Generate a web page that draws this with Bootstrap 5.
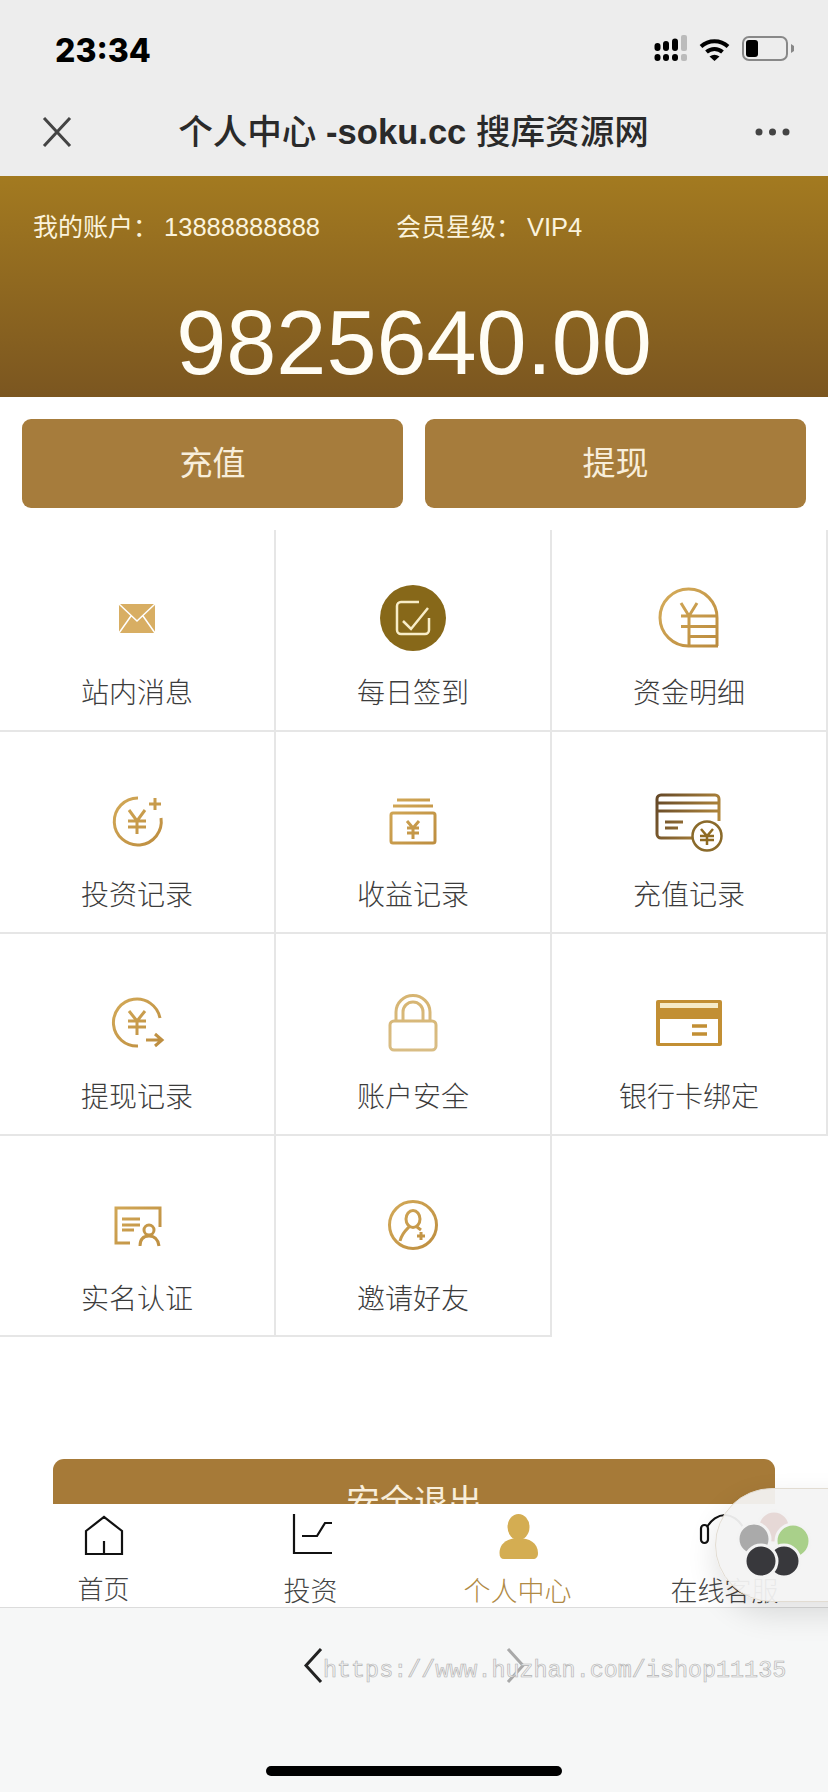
<!DOCTYPE html>
<html lang="zh-CN">
<head>
    <meta charset="UTF-8">
    <meta name="viewport" content="width=device-width, initial-scale=1.0">
    <title>个人中心</title>
    <link rel="stylesheet" href="https://cdn.jsdelivr.net/npm/bootstrap@5.3.0/dist/css/bootstrap.min.css">
    <style>
        body {
            background: #fff;
            font-family: "Liberation Sans", "Noto Sans CJK SC", sans-serif;
            color: #444;
        }
        .phone-page { width: 828px; height: 1792px; overflow: hidden; }
        .grad-defs { position: absolute; width: 0; height: 0; }

        .status-strip { height: 84px; padding: 14px 34px 0 55px; background: #ededed; }
        .clock-text { font-family: Inter, "Liberation Sans", sans-serif; font-size: 32px; font-weight: 800; color: #000; position: relative; top: 2px; }
        .status-icons { gap: 12px; }
        .title-strip { height: 92px; padding: 4px 38px 0 42px; background: #ededed; }
        .title-text { font-size: 34.6px; line-height: 40px; color: #2a2a2a; font-weight: 500; }

        .account-head { height: 222px; padding: 36px 0 0 33px; background: linear-gradient(180deg, #a37a20 0%, #7b5620 100%); color: #fbf3dc; }
        .account-line { font-size: 25px; line-height: 30px; }
        .account-item { width: 363px; }
        .account-value { font-size: 25.5px; margin-left: 6px; }
        .amount-text { margin: 56px 0 0 -33px; font-size: 90px; line-height: 90px; color: #fffdf5; text-align: center; }

        .action-row { padding: 22px 22px 0; gap: 22px; }
        .gold-btn { flex: 1; height: 89px; font-size: 33px; line-height: 73px; padding: 8px 0; border: 0; border-radius: 9px; background: #a67c3c; color: #f8eedb; }

        .menu-grid { margin-top: 22px; }
        .menu-cell { height: 202px; padding-top: 53px; border-right: 2px solid #e6e6e6; border-bottom: 2px solid #e6e6e6; }
        .menu-icon { width: 70px; height: 70px; overflow: visible; }
        .menu-label { margin-top: 23px; font-size: 28px; line-height: 36px; font-weight: 300; color: #3c3c3c; }
        .cell-short { height: 201px; }
        .cell-blank { border: 0; }
        .ln { fill: none; stroke-width: 3; }
        .ln-gold { stroke: url(#goldLine); }
        .ln-brown { stroke: url(#brownLine); }
        .ln-pale { stroke: url(#paleLine); }

        .logout-area { height: 167px; padding: 122px 53px 0; overflow: hidden; }
        .logout-btn { display: block; width: 100%; height: 86px; font-size: 34px; padding: 0; border: 0; border-radius: 11px; background: #a67a38; color: #f8eedb; }

        .tab-strip { height: 104px; background: #fff; border-bottom: 1px solid #dcdcdc; overflow: hidden; }
        .tab-link { padding: 8px 0 0; color: #444; font-size: 27px; line-height: 30px; }
        .tab-link:hover { color: #444; }
        .tab-icon { width: 46px; height: 48px; overflow: visible; }
        .tab-text { margin-top: 17px; font-weight: 300; }
        .tab-text-home { margin-top: 15px; font-size: 26px; }
        .tab-on { color: #b08a45; }

        .browser-strip { height: 184px; background: #f6f7f7; padding-top: 40px; }
        .arrow-row { gap: 183px; }
        .url-mark { position: absolute; left: 323px; top: 49px; font-family: "Liberation Mono", monospace; font-size: 23.4px; line-height: 28px; white-space: nowrap; color: #f2f2f2; -webkit-text-stroke: 0.6px #b0b0b0; }
        .home-pill { width: 296px; height: 10px; margin: 83px auto 0; border-radius: 5px; background: #000; }

        .float-ball { position: absolute; left: 715px; top: 1488px; width: 220px; height: 114px; border: 1px solid #e2dcd2; border-radius: 57px; background: rgba(243, 243, 243, .94); box-shadow: 0 12px 30px rgba(0, 0, 0, .12); }
        .ball-logo { position: absolute; left: 0; top: 0; width: 113px; height: 112px; }
    </style>
</head>
<body>
<svg class="grad-defs" aria-hidden="true">
    <defs>
        <linearGradient id="goldLine" gradientUnits="userSpaceOnUse" x1="0" y1="0" x2="70" y2="70">
            <stop offset="0" stop-color="#d8b05e"/><stop offset="1" stop-color="#b8873a"/>
        </linearGradient>
        <linearGradient id="brownLine" gradientUnits="userSpaceOnUse" x1="0" y1="0" x2="70" y2="30">
            <stop offset="0" stop-color="#5d4226"/><stop offset="1" stop-color="#b58a3c"/>
        </linearGradient>
        <linearGradient id="paleLine" gradientUnits="userSpaceOnUse" x1="0" y1="0" x2="0" y2="70">
            <stop offset="0" stop-color="#d6b36e"/><stop offset="1" stop-color="#d9be87"/>
        </linearGradient>
    </defs>
</svg>

<div class="phone-page d-flex flex-column position-relative">
    <div class="status-strip d-flex justify-content-between align-items-center">
        <span class="clock-text">23:34</span>
        <div class="status-icons d-flex align-items-center">
            <svg width="33" height="27" viewBox="0 0 33 27">
                <rect x="0.5" y="19" width="6" height="7" rx="3"/><rect x="9" y="19" width="6" height="7" rx="3"/><rect x="18" y="19" width="6" height="7" rx="3"/><rect x="27" y="19" width="6" height="7" rx="2" fill="#bbb"/>
                <rect x="0.5" y="8" width="6" height="8" rx="3"/><rect x="9" y="6" width="6" height="10" rx="3"/><rect x="18" y="3.5" width="6" height="12.5" rx="3"/><rect x="27" y="0" width="6" height="16" rx="2" fill="#bbb"/>
            </svg>
            <svg width="31" height="24" viewBox="0 0 31 24">
                <path d="M2 9.5A20 20 0 0 1 29 9.500M7.500 15A12 12 0 0 1 23.500 15" fill="none" stroke="#000" stroke-width="4"/>
                <path d="M10.500 19.500L15.500 24L20.500 19.500Q15.500 16 10.500 19.500Z"/>
            </svg>
            <svg width="52" height="25" viewBox="0 0 52 25">
                <rect x="1" y="1" width="44" height="23" rx="6" fill="none" stroke="#888" stroke-width="2"/>
                <rect x="4" y="4" width="12" height="17" rx="3"/>
                <path d="M49 8L52 10V15L49 17Z" fill="#888"/>
            </svg>
        </div>
    </div>

    <div class="title-strip d-flex align-items-center">
        <svg width="30" height="30" viewBox="0 0 30 30"><path d="M2 1L28 29M28 1L2 29" fill="none" stroke="#444" stroke-width="3"/></svg>
        <div class="title-text flex-grow-1 text-center">个人中心 <span class="fw-bold">-soku.cc</span> 搜库资源网</div>
        <svg width="35" height="8" viewBox="0 0 35 8" fill="#444"><circle cx="4" cy="4" r="3.500"/><circle cx="17.500" cy="4" r="3.500"/><circle cx="31" cy="4" r="3.500"/></svg>
    </div>

    <div class="account-head">
        <div class="account-line d-flex">
            <div class="account-item">我的账户：<span class="account-value">13888888888</span></div>
            <div>会员星级：<span class="account-value">VIP4</span></div>
        </div>
        <div class="amount-text">9825640.00</div>
    </div>

    <div class="action-row d-flex">
        <button class="btn gold-btn" type="button">充值</button>
        <button class="btn gold-btn" type="button">提现</button>
    </div>

    <div class="menu-grid row g-0">
        <div class="col-4 menu-cell d-flex flex-column align-items-center">
            <svg class="menu-icon" viewBox="0 0 70 70">
                <rect x="17" y="21" width="36" height="29" rx="1.500" fill="#d8ae63"/>
                <path d="M17 21L35 38L53 21M17 50L29 33M53 50L41 33" fill="none" stroke="#fff" stroke-width="1.500"/>
            </svg>
            <div class="menu-label">站内消息</div>
        </div>
        <div class="col-4 menu-cell d-flex flex-column align-items-center">
            <svg class="menu-icon" viewBox="0 0 70 70">
                <circle cx="35" cy="35" r="33" fill="#876819"/>
                <path d="M41 19H23a4 4 0 0 0-4 4V47a4 4 0 0 0 4 4H47a4 4 0 0 0 4-4V35" fill="none" stroke="#f8edc8" stroke-width="2.500"/>
                <path d="M25 38L33 46L50 25" fill="none" stroke="#f8edc8" stroke-width="2.500"/>
            </svg>
            <div class="menu-label">每日签到</div>
        </div>
        <div class="col-4 menu-cell d-flex flex-column align-items-center">
            <svg class="menu-icon" viewBox="0 0 70 70">
                <path class="ln ln-gold" d="M64 63H35A28.500 28.500 0 1 1 63 35V63"/>
                <path class="ln ln-gold" d="M27 20L35 33L43 20M27 33H63M27 43.500H63M35 33V63M35 53.500H63"/>
            </svg>
            <div class="menu-label">资金明细</div>
        </div>

        <div class="col-4 menu-cell d-flex flex-column align-items-center">
            <svg class="menu-icon" viewBox="0 0 70 70">
                <path class="ln ln-gold" d="M36 13A23.500 23.500 0 1 0 59 33"/>
                <path class="ln ln-gold" d="M27 25L35 36L43 25M26 36H44M26 42H44M35 36V49M53 13V25M47 19H59"/>
            </svg>
            <div class="menu-label">投资记录</div>
        </div>
        <div class="col-4 menu-cell d-flex flex-column align-items-center">
            <svg class="menu-icon" viewBox="0 0 70 70">
                <path class="ln ln-gold" d="M19 15H52M15 21H55"/>
                <rect class="ln ln-gold" x="13" y="28" width="44" height="30" rx="2"/>
                <path class="ln ln-gold" d="M29 36L35 43L41 36M29 43H41M29 48H41M35 43V54"/>
            </svg>
            <div class="menu-label">收益记录</div>
        </div>
        <div class="col-4 menu-cell d-flex flex-column align-items-center">
            <svg class="menu-icon" viewBox="0 0 70 70">
                <path class="ln ln-brown" d="M38 53H7a4 4 0 0 1-4-4V14a4 4 0 0 1 4-4H61a4 4 0 0 1 4 4V36"/>
                <path class="ln ln-brown" d="M3 18H65M3 26H65M11 37H29M11 43H24"/>
                <circle cx="53" cy="51" r="14.500" fill="#fff" stroke="#8a6a2a" stroke-width="2.500"/>
                <path d="M47 44L53 51L59 44M46 51H60M46 55H60M53 51V60" fill="none" stroke="#8e6a22" stroke-width="2.500"/>
            </svg>
            <div class="menu-label">充值记录</div>
        </div>

        <div class="col-4 menu-cell d-flex flex-column align-items-center">
            <svg class="menu-icon" viewBox="0 0 70 70">
                <path class="ln ln-gold" d="M58 31A23.500 23.500 0 1 0 36 59"/>
                <path class="ln ln-gold" d="M27 24L35 34L43 24M26 34H44M26 40H44M35 34V48M44 53H59M53 47L60 53L53 59"/>
            </svg>
            <div class="menu-label">提现记录</div>
        </div>
        <div class="col-4 menu-cell d-flex flex-column align-items-center">
            <svg class="menu-icon" viewBox="0 0 70 70">
                <rect class="ln ln-pale" x="12" y="34" width="46" height="29" rx="4"/>
                <path class="ln ln-pale" d="M18 34V25a17 16.500 0 0 1 34 0V34M25 34V25a10 10 0 0 1 20 0V34"/>
            </svg>
            <div class="menu-label">账户安全</div>
        </div>
        <div class="col-4 menu-cell d-flex flex-column align-items-center">
            <svg class="menu-icon" viewBox="0 0 70 70">
                <rect x="2" y="13" width="66" height="46" rx="2" fill="#c28f34"/>
                <rect x="6" y="16" width="58" height="5" fill="#f6ebc8"/>
                <rect x="6" y="32" width="58" height="24" fill="#fff"/>
                <path d="M38 39H53M38 47H53" stroke="#c28f34" stroke-width="3.500"/>
            </svg>
            <div class="menu-label">银行卡绑定</div>
        </div>

        <div class="col-4 menu-cell cell-short d-flex flex-column align-items-center">
            <svg class="menu-icon" viewBox="0 0 70 70">
                <path class="ln ln-gold" d="M58 38V19H14V54H28"/>
                <path class="ln ln-gold" d="M20 30H38M20 36H38M20 41H32"/>
                <circle class="ln ln-gold" cx="47" cy="41" r="5"/>
                <path class="ln ln-gold" d="M38 57C38 49 42 47 47 47S56 49 57 57"/>
            </svg>
            <div class="menu-label">实名认证</div>
        </div>
        <div class="col-4 menu-cell cell-short d-flex flex-column align-items-center">
            <svg class="menu-icon" viewBox="0 0 70 70">
                <circle class="ln ln-gold" cx="35" cy="36" r="23.500"/>
                <ellipse class="ln ln-gold" cx="35" cy="30" rx="7" ry="8.500"/>
                <path class="ln ln-gold" d="M22 52C24 44 28 41 31 38M39 38L43 41M43 43V51M39 47H47"/>
            </svg>
            <div class="menu-label">邀请好友</div>
        </div>
        <div class="col-4 menu-cell cell-short cell-blank"></div>
    </div>

    <div class="logout-area">
        <button class="btn logout-btn" type="button">安全退出</button>
    </div>

    <nav class="tab-strip nav nav-justified">
        <a class="nav-link tab-link d-flex flex-column align-items-center" href="#">
            <svg class="tab-icon" viewBox="0 0 46 48"><path d="M5 19L23 5L41 19V42H5ZM23 29V42" fill="none" stroke="#111" stroke-width="2.200"/></svg>
            <span class="tab-text tab-text-home">首页</span>
        </a>
        <a class="nav-link tab-link d-flex flex-column align-items-center" href="#">
            <svg class="tab-icon" viewBox="0 0 46 48"><path d="M6 2V41H44M14 24H29L37 11H44" fill="none" stroke="#111" stroke-width="2.200"/></svg>
            <span class="tab-text">投资</span>
        </a>
        <a class="nav-link tab-link d-flex flex-column align-items-center" href="#">
            <svg class="tab-icon" viewBox="0 0 46 48" fill="#d4ad52"><ellipse cx="23.500" cy="15" rx="11" ry="13"/><path d="M4.500 41C4.500 31 13 26 23.500 26S43 31 43 41C43 45 41 47 38 47H9C6 47 4.500 45 4.500 41Z"/></svg>
            <span class="tab-text tab-on">个人中心</span>
        </a>
        <a class="nav-link tab-link d-flex flex-column align-items-center" href="#">
            <svg class="tab-icon" viewBox="0 0 46 48"><path d="M5 15C9 8 16 3 23 3S37 8 41 15" fill="none" stroke="#111" stroke-width="2.200"/><rect x="-1" y="13" width="7" height="18" rx="3.500" fill="none" stroke="#111" stroke-width="2.200"/></svg>
            <span class="tab-text">在线客服</span>
        </a>
    </nav>

    <div class="browser-strip position-relative">
        <div class="arrow-row d-flex justify-content-center">
            <svg width="20" height="35" viewBox="0 0 20 35"><path d="M18 1L3 17.500L18 34" fill="none" stroke="#222" stroke-width="3"/></svg>
            <svg width="20" height="35" viewBox="0 0 20 35"><path d="M2 1L17 17.500L2 34" fill="none" stroke="#a9a9a9" stroke-width="3"/></svg>
        </div>
        <div class="url-mark">https://www.huzhan.com/ishop11135</div>
        <div class="home-pill"></div>
    </div>

    <div class="float-ball">
        <svg class="ball-logo" viewBox="0 0 113 112">
            <g stroke="#f3f3f3" stroke-width="3">
                <circle cx="58" cy="38" r="16" fill="#e6d8d6"/>
                <circle cx="77" cy="52" r="17" fill="#a9d08a"/>
                <circle cx="38" cy="50" r="16" fill="#aaa"/>
                <circle cx="68" cy="72" r="16" fill="#38383c"/>
                <circle cx="45" cy="72" r="16" fill="#38383c"/>
            </g>
        </svg>
    </div>
</div>

<script src="https://cdn.jsdelivr.net/npm/bootstrap@5.3.0/dist/js/bootstrap.bundle.min.js"></script>
</body>
</html>
